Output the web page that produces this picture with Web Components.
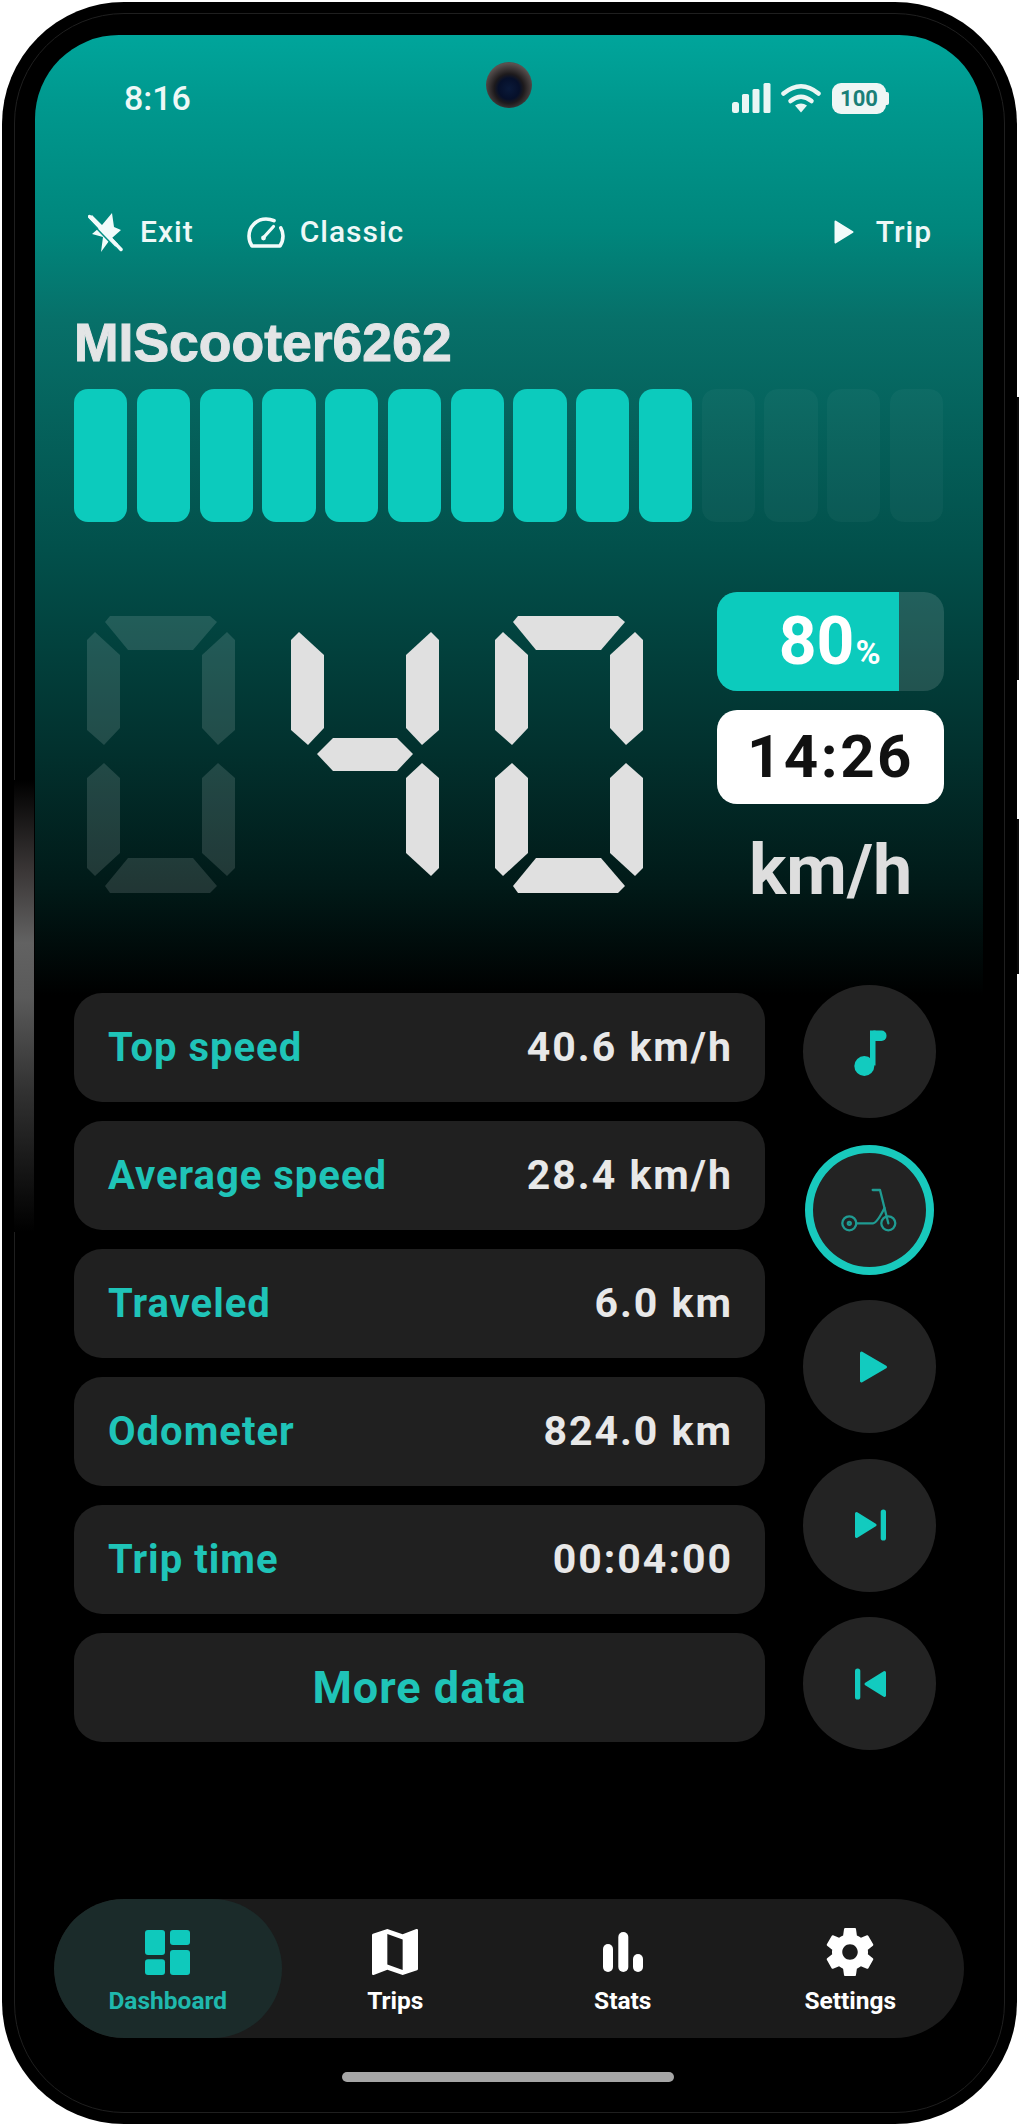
<!DOCTYPE html>
<html lang="en">
<head>
<meta charset="utf-8">
<title>Scooter dashboard</title>
<style>
  html, body { margin: 0; background: #fff; }
  body { font-family: Roboto, "Liberation Sans", sans-serif; }
</style>
</head>
<body>

<phone-frame>
  <status-bar></status-bar>
  <top-actions>
    <action-item label="Exit">
      <svg slot="icon" width="36" height="39" viewBox="0 0 36 39"><path d="M24 0 L26 14 L33 17 L24 25 L30 31 L27 34 L21 28 L13 39 L15 24 L4 21 L11 15 L1 5 L4 2 L14 12 Z" fill="#f2fbfa"/><path d="M1.500 3.500 L33 36.500" stroke="#f2fbfa" stroke-width="3.500" stroke-linecap="round"/><path d="M1 7.500 L29 36.500" stroke="#008f85" stroke-width="1.500"/></svg>
    </action-item>
    <action-item label="Classic" tight>
      <svg slot="icon" width="38" height="31" viewBox="0 0 38 31" fill="none" stroke="#f2fbfa" stroke-width="3.600" stroke-linecap="round" stroke-linejoin="round"><path d="M27 3.700 C24.500 2.500 22 2 19 2 C9.600 2 2 9.600 2 19 C2 22.500 3 26 5 29 H33 C35 26 36 22.500 36 19 C36 16 35.200 13.200 33.800 10.800"/><path d="M17 20 L26.500 9.500" stroke-width="3.200"/><circle cx="16.500" cy="21" r="2.400" fill="#f2fbfa" stroke="none"/></svg>
    </action-item>
    <action-item label="Trip" slot="right">
      <svg slot="icon" width="20" height="24" viewBox="0 0 20 24"><path d="M1.500 1.500 L18.500 12 L1.500 22.500 Z" fill="#f2fbfa" stroke="#f2fbfa" stroke-width="2" stroke-linejoin="round"/></svg>
    </action-item>
  </top-actions>
  <scooter-name>MIScooter6262</scooter-name>
  <level-bar value="10" total="14"></level-bar>

  <speed-panel>
    <seg-digit value="0" dim></seg-digit>
    <seg-digit value="4"></seg-digit>
    <seg-digit value="0"></seg-digit>
    <battery-chip slot="side" value="80"></battery-chip>
    <clock-chip slot="side">14:26</clock-chip>
    <unit-label slot="side">km/h</unit-label>
  </speed-panel>

  <dash-main>
    <stat-row label="Top speed" value="40.6 km/h"></stat-row>
    <stat-row label="Average speed" value="28.4 km/h"></stat-row>
    <stat-row label="Traveled" value="6.0 km"></stat-row>
    <stat-row label="Odometer" value="824.0 km"></stat-row>
    <stat-row label="Trip time" value="00:04:00"></stat-row>
    <stat-row more label="More data"></stat-row>

    <round-button slot="buttons">
      <svg width="60" height="60" viewBox="-30 -30 60 60" fill="#12cbbf"><circle cx="-5.700" cy="14" r="10"/><rect x="0" y="-21.500" width="5.500" height="35"/><rect x="0" y="-21.500" width="16.500" height="10.500" rx="5"/></svg>
    </round-button>
    <round-button slot="buttons" active>
      <svg width="60" height="60" viewBox="-30 -30 60 60" fill="none" stroke="#1f9b92" stroke-width="2.300" stroke-linecap="round" stroke-linejoin="round"><path d="M2.700 -20 H10 L18.300 13.300"/><circle cx="18.300" cy="13.300" r="7"/><circle cx="-20.700" cy="13.300" r="7"/><circle cx="-20.700" cy="13.300" r="1.500"/><path d="M-13.700 13.300 H3 Q7 13 14.500 -2"/></svg>
    </round-button>
    <round-button slot="buttons">
      <svg width="60" height="60" viewBox="-30 -30 60 60"><path d="M-8.500 -14 L15.500 0 L-8.500 14 Z" fill="#12cbbf" stroke="#12cbbf" stroke-width="3" stroke-linejoin="round"/></svg>
    </round-button>
    <round-button slot="buttons">
      <svg width="60" height="60" viewBox="-30 -30 60 60" fill="#12cbbf"><path d="M-13.500 -11.500 L5 0 L-13.500 11.500 Z" stroke="#12cbbf" stroke-width="3" stroke-linejoin="round"/><rect x="10.700" y="-15.500" width="5.300" height="31" rx="2.600"/></svg>
    </round-button>
    <round-button slot="buttons">
      <svg width="60" height="60" viewBox="-30 -30 60 60" fill="#12cbbf"><path d="M14.500 -11.500 L-4 0 L14.500 11.500 Z" stroke="#12cbbf" stroke-width="3" stroke-linejoin="round"/><rect x="-15" y="-15.500" width="5.300" height="31" rx="2.600"/></svg>
    </round-button>
  </dash-main>

  <bottom-nav>
    <nav-item label="Dashboard" active>
      <svg width="45" height="45" viewBox="0 0 45 45" fill="#0fc9bc"><rect width="20" height="25" rx="3"/><rect y="29.300" width="20" height="15.700" rx="3"/><rect x="25" width="20" height="15" rx="3"/><rect x="25" y="20" width="20" height="25" rx="3"/></svg>
    </nav-item>
    <nav-item label="Trips">
      <svg width="46" height="46" viewBox="3 3 18 18"><path fill="#fff" d="M20.500 3l-.16.03L15 5.100 9 3 3.360 4.900c-.21.07-.36.25-.36.48V20.500c0 .28.22.5.5.5l.16-.03L9 18.900l6 2.100 5.640-1.900c.21-.07.36-.25.36-.48V3.500c0-.28-.22-.5-.5-.5zM15 19l-6-2.110V5l6 2.110V19z"/></svg>
    </nav-item>
    <nav-item label="Stats">
      <svg width="40" height="40" viewBox="0 0 40 40" fill="#fff"><rect y="12" width="10" height="28" rx="5"/><rect x="15.300" width="10" height="40" rx="5"/><rect x="30" y="22" width="10" height="18" rx="5"/></svg>
    </nav-item>
    <nav-item label="Settings">
      <svg width="60" height="60" viewBox="0 0 24 24"><path fill="#fff" d="M19.140 12.940c.04-.3.06-.61.06-.94 0-.32-.02-.64-.07-.94l2.030-1.580c.18-.14.23-.41.12-.61l-1.920-3.320c-.12-.22-.37-.29-.59-.22l-2.390.96c-.5-.38-1.030-.7-1.620-.94l-.36-2.540c-.04-.24-.24-.41-.48-.41h-3.840c-.24 0-.43.17-.47.41l-.36 2.540c-.59.24-1.130.57-1.620.94l-2.390-.96c-.22-.08-.47 0-.59.22L2.740 8.870c-.12.21-.08.47.12.61l2.030 1.580c-.05.3-.09.63-.09.94s.02.64.07.94l-2.030 1.580c-.18.14-.23.41-.12.61l1.920 3.320c.12.22.37.29.59.22l2.390-.96c.5.38 1.030.7 1.620.94l.36 2.540c.05.24.24.41.48.41h3.840c.24 0 .44-.17.47-.41l.36-2.540c.59-.24 1.130-.56 1.620-.94l2.390.96c.22.08.47 0 .59-.22l1.920-3.320c.12-.22.07-.47-.12-.61l-2.010-1.580zM12 15.100c-1.710 0-3.100-1.390-3.100-3.100s1.390-3.100 3.100-3.100 3.100 1.390 3.100 3.100-1.390 3.100-3.100 3.100z"/></svg>
    </nav-item>
  </bottom-nav>
  <home-indicator></home-indicator>
</phone-frame>

<script>
  // small base class, each element just hands over its markup
  class Shadowed extends HTMLElement {
    connectedCallback () {
      if (this.shadowRoot) return;
      const root = this.attachShadow({mode: 'open'});
      root.innerHTML = this.render();
    }
    attr (name, fallback = '') {
      return this.hasAttribute(name) ? this.getAttribute(name) : fallback;
    }
  }

  class PhoneFrame extends Shadowed {
    render () {
      return `<style>
        :host { display: block; box-sizing: border-box; position: relative; width: 1015px; height: 2122px;
                margin: 2px 0 0 2px; padding: 33px 34px 33px 33px; background: #000; border-radius: 122px; }
        .line { position: absolute; inset: 11px 12px; border: 1px solid #1f1f1f; border-radius: 110px; pointer-events: none; }
        .glare { position: absolute; left: 12px; top: 778px; width: 20px; height: 452px;
                 background: linear-gradient(#000 0, #3a3636 20%, #626262 36%, #5a5a5a 48%, #333 68%, #0c0c0c 92%, #000 100%); }
        .key { position: absolute; right: -2px; width: 2px; background: #0c0c0c; }
        .key.a { top: 395px; height: 283px; }
        .key.b { top: 817px; height: 155px; }
        .screen { position: relative; height: 100%; width: 948px; border-radius: 84px; overflow: hidden;
                  background: linear-gradient(#00a59b 0, #00988e 70px, #00867c 196px, #077069 285px, #02504b 515px, #02302d 720px, #011a18 850px, #000 960px); }
        .cam { position: absolute; left: 451px; top: 27px; width: 46px; height: 46px; border-radius: 50%;
               background: radial-gradient(circle at 50% 58%, #0a1a3a 0, #06102a 30%, #1d1a1c 42%, #5a5250 72%, #2a2624 100%); }
      </style>
      <div class="line"></div>
      <div class="glare"></div>
      <div class="key a"></div>
      <div class="key b"></div>
      <div class="screen"><div class="cam"></div><slot></slot></div>`;
    }
  }

  class StatusBar extends Shadowed {
    render () {
      return `<style>
        :host { display: flex; box-sizing: border-box; align-items: center; justify-content: space-between;
                height: 95px; padding: 46px 94px 15px 89px; color: #eef8f7;
                font: 500 34px/34px Roboto, sans-serif; }
        .icons { display: flex; align-items: center; gap: 10px; }
        .batt { position: relative; box-sizing: border-box; width: 54px; height: 31px; margin-left: 1px; margin-right: 3px;
                background: #eef6f5; border-radius: 9px; color: #1a7f78;
                font: 700 22px/31px Roboto, sans-serif; text-align: center; }
        .batt::after { content: ""; position: absolute; right: -3px; top: 9px; width: 3px; height: 13px;
                       background: #eef6f5; border-radius: 0 2px 2px 0; }
      </style>
      <span>8:16</span>
      <div class="icons">
        <svg width="39" height="30" viewBox="0 0 39 30" fill="#eaf6f4"><rect y="19" width="7" height="11" rx="2.500"/><rect x="10" y="11" width="7" height="19" rx="1.500"/><rect x="20.500" y="6" width="7" height="24" rx="1.500"/><rect x="31.500" width="7" height="30" rx="1.500"/></svg>
        <svg width="40" height="30" viewBox="0 0 40 30" fill="none" stroke="#eaf6f4" stroke-width="4.500" stroke-linecap="round"><path d="M2.500 10.500 Q20 -4 37.500 10.500"/><path d="M9.500 18 Q20 9.500 30.500 18"/><path d="M14 22.500 Q20 18.500 26 22.500 L20 29.500 Z" fill="#eaf6f4" stroke="none"/></svg>
        <div class="batt">100</div>
      </div>`;
    }
  }

  class TopActions extends Shadowed {
    render () {
      return `<style>
        :host { display: flex; align-items: center; justify-content: space-between; height: 40px;
                margin-top: 82px; padding: 0 51px 0 53px; }
        .left { display: flex; gap: 53px; }
      </style>
      <div class="left"><slot></slot></div>
      <slot name="right"></slot>`;
    }
  }

  class ActionItem extends Shadowed {
    render () {
      return `<style>
        :host { display: flex; align-items: center; gap: 16px; color: #eef8f7;
                font: 500 30px/40px Roboto, sans-serif; letter-spacing: 1px; }
        :host([tight]) { gap: 15px; }
        :host([slot=right]) { gap: 22px; }
        ::slotted(svg) { display: block; }
      </style>
      <slot name="icon"></slot><span>${this.attr('label')}</span>`;
    }
  }

  class ScooterName extends Shadowed {
    render () {
      return `<style>
        :host { display: block; height: 60px; margin-top: 61px; padding-left: 39px; color: #e3e5e6;
                font: 700 53.500px/60px "Liberation Sans", Arial, sans-serif; -webkit-text-stroke: 1px #e3e5e6; }
      </style><slot></slot>`;
    }
  }

  class LevelBar extends Shadowed {
    render () {
      const total = +this.attr('total', 14);
      const value = +this.attr('value', 0);
      let cells = '';
      for (let i = 0; i < total; i++) cells += `<i class="${i < value ? 'on' : ''}"></i>`;
      return `<style>
        :host { display: flex; gap: 9.500px; height: 133px; margin: 16px 40px 0 39px; }
        i { flex: 1; border-radius: 14px; background: rgba(255,255,255,.035); }
        i.on { background: #0ccbbd; }
      </style>${cells}`;
    }
  }

  class SpeedPanel extends Shadowed {
    render () {
      return `<style>
        :host { display: flex; align-items: flex-start; height: 313px; margin-top: 70px; padding-left: 52px; }
        .digits { display: flex; gap: 56px; padding-top: 23px; }
        .side { display: flex; flex-direction: column; width: 227px; margin-left: 74px; }
      </style>
      <div class="digits"><slot></slot></div>
      <div class="side"><slot name="side"></slot></div>`;
    }
  }

  // seven segment digit, a = top, then clockwise, g = middle
  const SEGMENTS = {0: 'abcdef', 1: 'bc', 2: 'abged', 3: 'abgcd', 4: 'fgbc', 5: 'afgcd', 6: 'afgedc', 7: 'abc', 8: 'abcdefg', 9: 'abcdfg'};

  class SegDigit extends Shadowed {
    render () {
      const lit = SEGMENTS[this.attr('value', '8')];
      this.setAttribute('role', 'img');
      this.setAttribute('aria-label', this.attr('value', '8'));
      return `<style>
        :host { display: grid; width: 148px; height: 278px; --seg: #e0e0e0;
                grid-template-columns: 18px 15px 82px 15px 18px;
                grid-template-rows: 17px 18px 88px 7px 18px 8px 87px 18px 17px; }
        :host([dim]) { --seg: rgba(255,255,255,.13); }
        b { background: var(--seg); }
        .a { grid-column: 2 / 5; grid-row: 1 / 3; clip-path: polygon(5px 1px,105px 1px,112px 7px,88px 35px,23px 35px,0 7px); }
        .f { grid-column: 1 / 3; grid-row: 2 / 5; clip-path: polygon(0 8px,8px 0,33px 23px,33px 96px,17px 113px,0 98px); }
        .b { grid-column: 4 / 6; grid-row: 2 / 5; clip-path: polygon(33px 8px,25px 0,0 23px,0 96px,16px 113px,33px 98px); }
        .g { grid-column: 2 / 5; grid-row: 4 / 7; clip-path: polygon(8px 16px,24px 0,88px 0,104px 16px,88px 33px,24px 33px); }
        .e { grid-column: 1 / 3; grid-row: 6 / 9; clip-path: polygon(17px 0,33px 15px,33px 90px,8px 113px,0 105px,0 15px); }
        .c { grid-column: 4 / 6; grid-row: 6 / 9; clip-path: polygon(16px 0,0 15px,0 90px,25px 113px,33px 105px,33px 15px); }
        .d { grid-column: 2 / 5; grid-row: 8 / 10; clip-path: polygon(23px 0,88px 0,112px 28px,105px 35px,5px 35px,0 28px); }
      </style>${[...lit].map(s => `<b class="${s}"></b>`).join('')}`;
    }
  }

  class BatteryChip extends Shadowed {
    render () {
      const v = this.attr('value', '0');
      return `<style>
        :host { display: block; height: 99px; border-radius: 20px; overflow: hidden;
                background: rgba(255,255,255,.13); color: #fff; }
        .fill { box-sizing: border-box; display: flex; align-items: baseline; justify-content: flex-end; height: 100%;
                width: ${v}%; padding-right: 18px; background: #0ccbbd;
                font: 700 66px/99px Roboto, sans-serif; }
        small { font-size: 34px; font-weight: 700; margin-left: 1px; }
      </style>
      <div class="fill">${v}<small>%</small></div>`;
    }
  }

  class ClockChip extends Shadowed {
    render () {
      return `<style>
        :host { display: block; height: 94px; margin-top: 19px; border-radius: 20px; background: #fff; color: #111;
                font: 700 60px/94px Roboto, sans-serif; letter-spacing: 2.500px; text-align: center; }
      </style><slot></slot>`;
    }
  }

  class UnitLabel extends Shadowed {
    render () {
      return `<style>
        :host { display: block; height: 70px; margin-top: 31px; color: #dedede; text-align: center;
                font: 700 70px/70px Roboto, sans-serif; }
      </style><slot></slot>`;
    }
  }

  class DashMain extends Shadowed {
    render () {
      return `<style>
        :host { display: flex; margin: 80px 0 0 39px; }
        .stats { display: flex; flex-direction: column; gap: 19px; width: 691px; margin-top: 8px; }
        .buttons { display: flex; flex-direction: column; align-items: center; gap: 25.500px; width: 133px; margin-left: 38px; }
      </style>
      <div class="stats"><slot></slot></div>
      <div class="buttons"><slot name="buttons"></slot></div>`;
    }
  }

  class StatRow extends Shadowed {
    render () {
      return `<style>
        :host { display: flex; align-items: center; justify-content: space-between; box-sizing: border-box; height: 109px;
                padding: 0 32px 0 34px; border-radius: 28px; background: #202020;
                font: 700 40px/109px Roboto, sans-serif; letter-spacing: 1px; }
        :host([more]) { justify-content: center; font-size: 45px; padding: 0; }
        .l { color: #1fc4b8; }
        .v { color: #e8e8e8; font-size: 41px; letter-spacing: 2px; }
      </style>
      <span class="l">${this.attr('label')}</span>
      ${this.hasAttribute('value') ? `<span class="v">${this.attr('value')}</span>` : ''}`;
    }
  }

  class RoundButton extends Shadowed {
    render () {
      return `<style>
        :host { display: flex; align-items: center; justify-content: center; box-sizing: border-box;
                width: 133px; height: 133px; border-radius: 50%; background: #232323; }
        :host([active]) { width: 129px; height: 130px; margin-top: 1px; border: 8px solid #18c9bd; }
        ::slotted(svg) { display: block; }
      </style><slot></slot>`;
    }
  }

  class BottomNav extends Shadowed {
    render () {
      return `<style>
        :host { display: flex; height: 139px; margin: 149px 19px 0; border-radius: 70px; background: #1b1b1b; overflow: hidden; }
      </style><slot></slot>`;
    }
  }

  class NavItem extends Shadowed {
    render () {
      return `<style>
        :host { flex: 1; display: flex; flex-direction: column; align-items: center; box-sizing: border-box;
                padding-top: 27px; border-radius: 70px; color: #fff;
                font: 700 24.500px/30px Roboto, sans-serif; }
        :host([active]) { background: #1b2b2a; color: #1fb8ad; }
        .icon { display: flex; align-items: center; justify-content: center; height: 52px; margin-bottom: 8px; }
        ::slotted(svg) { display: block; }
      </style>
      <div class="icon"><slot></slot></div>
      <span>${this.attr('label')}</span>`;
    }
  }

  class HomeIndicator extends Shadowed {
    render () {
      return `<style>
        :host { display: block; width: 332px; height: 10px; margin: 34px 0 0 307px; border-radius: 5px; background: #a6a6a6; }
      </style>`;
    }
  }

  customElements.define('phone-frame', PhoneFrame);
  customElements.define('status-bar', StatusBar);
  customElements.define('top-actions', TopActions);
  customElements.define('action-item', ActionItem);
  customElements.define('scooter-name', ScooterName);
  customElements.define('level-bar', LevelBar);
  customElements.define('speed-panel', SpeedPanel);
  customElements.define('seg-digit', SegDigit);
  customElements.define('battery-chip', BatteryChip);
  customElements.define('clock-chip', ClockChip);
  customElements.define('unit-label', UnitLabel);
  customElements.define('dash-main', DashMain);
  customElements.define('stat-row', StatRow);
  customElements.define('round-button', RoundButton);
  customElements.define('bottom-nav', BottomNav);
  customElements.define('nav-item', NavItem);
  customElements.define('home-indicator', HomeIndicator);
</script>
</body>
</html>
